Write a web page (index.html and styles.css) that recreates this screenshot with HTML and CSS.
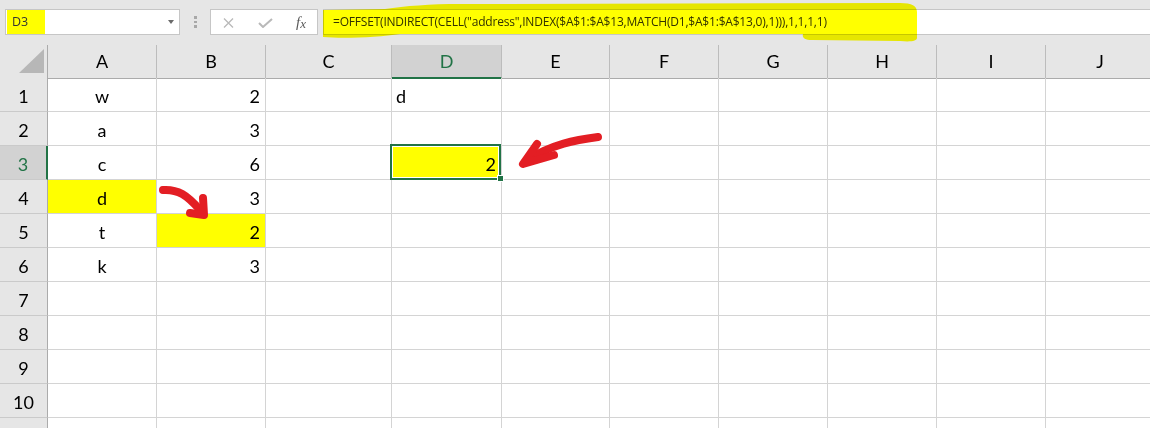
FILE: index.html
```html
<!DOCTYPE html>
<html>
<head>
<meta charset="utf-8">
<link rel="stylesheet" href="styles.css">
</head>
<body>
<div class="toolbar">
  <div class="namebox"><span class="ref">D3</span><span class="caret"></span></div>
  <div class="dots"><span></span><span></span><span></span></div>
  <div class="fxbox">
    <svg class="ico-x" width="11" height="10" viewBox="0 0 11 10"><path d="M1 0.5 L10 9.5 M10 0.5 L1 9.5" stroke="#b9b9b9" stroke-width="1.3" fill="none"/></svg>
    <svg class="ico-check" width="15" height="10" viewBox="0 0 15 10"><path d="M1 5 L5 9 L14 1" stroke="#b9b9b9" stroke-width="2" fill="none"/></svg>
    <span class="ico-fx">f<span class="sub">x</span></span>
  </div>
  <div class="formula">=OFFSET(INDIRECT(CELL("address",INDEX($A$1:$A$13,MATCH(D1,$A$1:$A$13,0),1))),1,1,1,1)</div>
</div>

<div class="sheet">
  <div class="row head">
    <div class="cell corner"><svg width="47" height="32" viewBox="0 0 47 32"><polygon points="19,28 44,4 44,28" fill="#b7b7b7"/></svg></div>
    <div class="cell ch">A</div><div class="cell ch">B</div><div class="cell ch">C</div>
    <div class="cell ch active">D</div><div class="cell ch">E</div><div class="cell ch">F</div>
    <div class="cell ch">G</div><div class="cell ch">H</div><div class="cell ch">I</div><div class="cell ch">J</div>
  </div>
  <div class="row">
    <div class="cell rh">1</div><div class="cell ctr">w</div><div class="cell num">2</div><div class="cell"></div>
    <div class="cell">d</div><div class="cell"></div><div class="cell"></div><div class="cell"></div><div class="cell"></div><div class="cell"></div><div class="cell"></div>
  </div>
  <div class="row">
    <div class="cell rh">2</div><div class="cell ctr">a</div><div class="cell num">3</div><div class="cell"></div>
    <div class="cell"></div><div class="cell"></div><div class="cell"></div><div class="cell"></div><div class="cell"></div><div class="cell"></div><div class="cell"></div>
  </div>
  <div class="row">
    <div class="cell rh active">3</div><div class="cell ctr">c</div><div class="cell num">6</div><div class="cell"></div>
    <div class="cell num yellow selected">2<span class="handle"></span></div><div class="cell"></div><div class="cell"></div><div class="cell"></div><div class="cell"></div><div class="cell"></div><div class="cell"></div>
  </div>
  <div class="row">
    <div class="cell rh">4</div><div class="cell ctr yellow">d</div><div class="cell num">3</div><div class="cell"></div>
    <div class="cell"></div><div class="cell"></div><div class="cell"></div><div class="cell"></div><div class="cell"></div><div class="cell"></div><div class="cell"></div>
  </div>
  <div class="row">
    <div class="cell rh">5</div><div class="cell ctr">t</div><div class="cell num yellow">2</div><div class="cell"></div>
    <div class="cell"></div><div class="cell"></div><div class="cell"></div><div class="cell"></div><div class="cell"></div><div class="cell"></div><div class="cell"></div>
  </div>
  <div class="row">
    <div class="cell rh">6</div><div class="cell ctr">k</div><div class="cell num">3</div><div class="cell"></div>
    <div class="cell"></div><div class="cell"></div><div class="cell"></div><div class="cell"></div><div class="cell"></div><div class="cell"></div><div class="cell"></div>
  </div>
  <div class="row">
    <div class="cell rh">7</div><div class="cell"></div><div class="cell"></div><div class="cell"></div>
    <div class="cell"></div><div class="cell"></div><div class="cell"></div><div class="cell"></div><div class="cell"></div><div class="cell"></div><div class="cell"></div>
  </div>
  <div class="row">
    <div class="cell rh">8</div><div class="cell"></div><div class="cell"></div><div class="cell"></div>
    <div class="cell"></div><div class="cell"></div><div class="cell"></div><div class="cell"></div><div class="cell"></div><div class="cell"></div><div class="cell"></div>
  </div>
  <div class="row">
    <div class="cell rh">9</div><div class="cell"></div><div class="cell"></div><div class="cell"></div>
    <div class="cell"></div><div class="cell"></div><div class="cell"></div><div class="cell"></div><div class="cell"></div><div class="cell"></div><div class="cell"></div>
  </div>
  <div class="row">
    <div class="cell rh">10</div><div class="cell"></div><div class="cell"></div><div class="cell"></div>
    <div class="cell"></div><div class="cell"></div><div class="cell"></div><div class="cell"></div><div class="cell"></div><div class="cell"></div><div class="cell"></div>
  </div>
  <div class="row">
    <div class="cell rh">11</div><div class="cell"></div><div class="cell"></div><div class="cell"></div>
    <div class="cell"></div><div class="cell"></div><div class="cell"></div><div class="cell"></div><div class="cell"></div><div class="cell"></div><div class="cell"></div>
  </div>
</div>

<svg class="marker" width="1150" height="428" viewBox="0 0 1150 428">
  <path d="M323 10 L385 9 C405 6 430 4 460 4 L900 3 C912 3 917 6 917 12 L917 38 C917 41 911 42 900 41 L812 40 C804 40 802 37 803 34 L400 34 C380 37 345 39 323 37 Z" fill="#ffff00"/>
</svg>
<svg class="arrows" width="1150" height="428" viewBox="0 0 1150 428">
  <g stroke="#e31e24" stroke-width="8" stroke-linecap="round" stroke-linejoin="round" fill="none">
    <path d="M163 190 C178 189 187 195 200 210"/>
    <path d="M203 198 L204 215 L190 213"/>
    <path d="M598 137 C575 140 553 144 527 160"/>
    <path d="M537 144 L523 164 L554 155"/>
  </g>
</svg>
</body>
</html>
```

FILE: styles.css
```css
html, body {
  margin: 0;
  padding: 0;
}
body {
  width: 1150px;
  height: 428px;
  overflow: hidden;
  position: relative;
  background: #ffffff;
  font-family: Lato, "Open Sans", sans-serif;
}

/* ---------- toolbar ---------- */
.toolbar {
  height: 45px;
  box-sizing: border-box;
  background: #e6e6e6;
  display: flex;
  align-items: flex-start;
  padding: 9px 0 0 5px;
  font-family: "Open Sans", "Noto Sans", sans-serif;
  font-size: 12.5px;
  color: #333333;
}
.namebox {
  width: 175px;
  height: 26px;
  box-sizing: border-box;
  border: 1px solid #c6c6c6;
  background: #ffffff;
  display: flex;
  align-items: stretch;
  justify-content: space-between;
  padding: 0 5px 0 1px;
}
.namebox .ref {
  background: #ffff00;
  width: 38px;
  box-sizing: border-box;
  padding-left: 5px;
  line-height: 24px;
}
.namebox .caret {
  align-self: center;
  width: 0;
  height: 0;
  border-top: 4px solid #6a6a6a;
  border-left: 3.5px solid transparent;
  border-right: 3.5px solid transparent;
}
.dots {
  margin: 7px 0 0 14px;
  display: flex;
  flex-direction: column;
  gap: 2px;
}
.dots span {
  width: 3px;
  height: 2.5px;
  background: #a8a8a8;
}
.fxbox {
  margin-left: 13px;
  width: 108px;
  height: 26px;
  box-sizing: border-box;
  border: 1px solid #c6c6c6;
  background: #ffffff;
  display: flex;
  align-items: center;
  padding-left: 12px;
}
.ico-x { margin-top: 1px; }
.ico-check { margin-left: 24px; margin-top: 1px; }
.ico-fx {
  margin-left: 23px;
  font-family: "Liberation Serif", "DejaVu Serif", serif;
  font-style: italic;
  font-size: 15px;
  color: #5a5a5a;
  line-height: 1;
}
.ico-fx .sub {
  font-size: 13px;
  position: relative;
  top: 1px;
}
.formula {
  margin-left: 5px;
  flex: 1;
  margin-right: -3px;
  height: 26px;
  box-sizing: border-box;
  border: 1px solid #c6c6c6;
  background: #ffffff;
  padding-left: 9px;
  line-height: 24px;
  font-size: 12px;
  letter-spacing: -0.2px;
  white-space: nowrap;
  overflow: hidden;
}

/* ---------- sheet ---------- */
.row {
  display: grid;
  grid-template-columns: 48px 109px 109px 126px 110px 108px 109px 109px 109px 109px 109px;
  height: 34px;
}
.row.head {
  height: 33px;
}
.cell {
  box-sizing: border-box;
  border-right: 1px solid #d4d4d4;
  border-bottom: 1px solid #d4d4d4;
  padding: 3px 4px 0 4px;
  line-height: 30px;
  font-size: 18px;
  color: #000000;
  white-space: nowrap;
  position: relative;
}
.ctr { text-align: center; }
.num { text-align: right; padding-right: 5px; }
.yellow { background: #ffff00; }

.corner {
  background: #e6e6e6;
  border-right-color: #ababab;
  border-bottom-color: #ababab;
  padding: 0;
}
.corner svg { display: block; }
.ch {
  background: #e6e6e6;
  border-right-color: #bcbcbc;
  border-bottom-color: #ababab;
  text-align: center;
  padding-top: 1px;
  line-height: 31px;
}
.ch.active {
  background: #d2d2d2;
  color: #217346;
  border-bottom: 2px solid #217346;
}
.rh {
  background: #e6e6e6;
  border-right-color: #ababab;
  border-bottom-color: #cacaca;
  text-align: center;
  padding-left: 0;
  padding-right: 0;
}
.rh.active {
  background: #d2d2d2;
  color: #217346;
  border-right: 2px solid #217346;
}

.selected::after {
  content: "";
  position: absolute;
  top: -2px;
  left: -2px;
  right: 0;
  bottom: -1px;
  border: 2px solid #217346;
  box-shadow: inset 0 0 0 1px #ffffff;
  pointer-events: none;
}
.handle {
  position: absolute;
  right: -3px;
  bottom: -3px;
  width: 5px;
  height: 5px;
  background: #217346;
  border: 1px solid #ffffff;
  z-index: 2;
}

/* ---------- annotations ---------- */
.marker {
  position: absolute;
  top: 0;
  left: 0;
  mix-blend-mode: multiply;
  pointer-events: none;
}
.arrows {
  position: absolute;
  top: 0;
  left: 0;
  pointer-events: none;
}
```
